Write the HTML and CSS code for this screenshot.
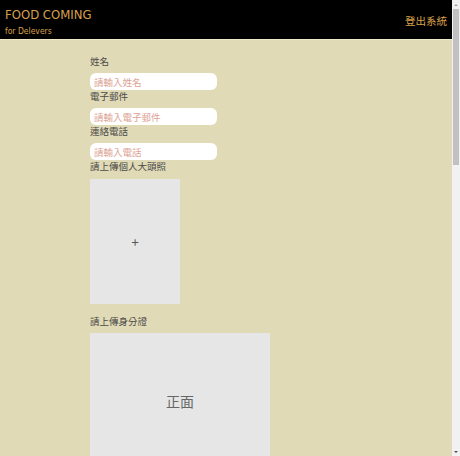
FILE: index.html
```html
<!DOCTYPE html>
<html lang="zh-Hant">
<head>
<meta charset="utf-8">
<title>Food Coming</title>
<link rel="stylesheet" href="styles.css">
</head>
<body>
<header class="topbar">
  <div class="brand">
    <div class="brand-title">FOOD COMING</div>
    <div class="brand-sub">for Delevers</div>
  </div>
  <a class="logout" href="#">登出系統</a>
</header>
<main class="form">
  <label class="label first">姓名</label>
  <input class="field" type="text" placeholder="請輸入姓名">
  <label class="label">電子郵件</label>
  <input class="field" type="text" placeholder="請輸入電子郵件">
  <label class="label">連絡電話</label>
  <input class="field" type="text" placeholder="請輸入電話">
  <label class="label">請上傳個人大頭照</label>
  <div class="upload avatar">+</div>
  <label class="label id-label">請上傳身分證</label>
  <div class="upload idcard">正面</div>
  <div class="upload idcard">反面</div>
</main>
<div class="scrollbar" aria-hidden="true">
  <div class="sb-arrow up"></div>
  <div class="sb-track"><div class="sb-thumb"></div></div>
  <div class="sb-arrow down"></div>
</div>
</body>
</html>
```
FILE: styles.css
```css
html, body {
  margin: 0;
  padding: 0;
}
body {
  background: #e1dab6;
  font-family: "Noto Sans CJK TC", "Noto Sans", sans-serif;
  color: #444;
  min-height: 1280px;
}
.topbar {
  display: flex;
  justify-content: space-between;
  align-items: flex-start;
  background: #000;
  height: 39px;
  border-bottom: 1px solid #f0e9c8;
  padding: 0 13px 0 5px;
}
.brand {
  display: flex;
  flex-direction: column;
  color: #d9a04c;
}
.brand-title {
  font-family: "DejaVu Sans Condensed", "DejaVu Sans", sans-serif;
  font-stretch: condensed;
  font-size: 13px;
  line-height: 16px;
  margin-top: 7px;
}
.brand-sub {
  font-family: "DejaVu Sans Condensed", "DejaVu Sans", sans-serif;
  font-stretch: condensed;
  font-size: 8.5px;
  line-height: 12px;
  margin-top: 2px;
}
.logout {
  color: #d9a04c;
  text-decoration: none;
  font-size: 10.5px;
  line-height: 14px;
  margin-top: 14px;
}
.form {
  display: flex;
  flex-direction: column;
  align-items: flex-start;
  padding-left: 90px;
  padding-bottom: 40px;
}
.label {
  font-size: 9.5px;
  line-height: 12px;
  color: #4a4a4a;
}
.label.first {
  margin-top: 15px;
}
.field {
  box-sizing: border-box;
  width: 127px;
  height: 17px;
  margin: 6px 0 0;
  border: none;
  border-radius: 6px;
  background: #fff;
  padding: 0 4px;
  font-family: "Noto Sans CJK TC", sans-serif;
  font-size: 9.5px;
  outline: none;
}
.field::placeholder {
  color: #dda394;
}
.upload {
  display: flex;
  align-items: center;
  justify-content: center;
  background: #e6e6e6;
  color: #555;
}
.avatar {
  width: 90px;
  height: 125px;
  margin-top: 7px;
  font-size: 13px;
}
.id-label {
  margin-top: 11px;
}
.idcard {
  width: 180px;
  height: 136px;
  margin-top: 6px;
  margin-bottom: 10px;
  font-size: 14px;
  color: #666;
}
.scrollbar {
  position: fixed;
  top: 0;
  right: 0;
  bottom: 0;
  width: 8px;
  background: #f1f1f1;
  display: flex;
  flex-direction: column;
}
.sb-arrow {
  height: 9px;
  display: flex;
  align-items: center;
  justify-content: center;
}
.sb-arrow.up::after,
.sb-arrow.down::after {
  content: "";
  border-left: 2px solid transparent;
  border-right: 2px solid transparent;
}
.sb-arrow.up::after {
  border-bottom: 2px solid #a3a3a3;
}
.sb-arrow.down::after {
  border-top: 2px solid #505050;
}
.sb-track {
  flex: 1;
  padding: 0 1px;
}
.sb-thumb {
  height: 156px;
  background: #c1c1c1;
}
```
